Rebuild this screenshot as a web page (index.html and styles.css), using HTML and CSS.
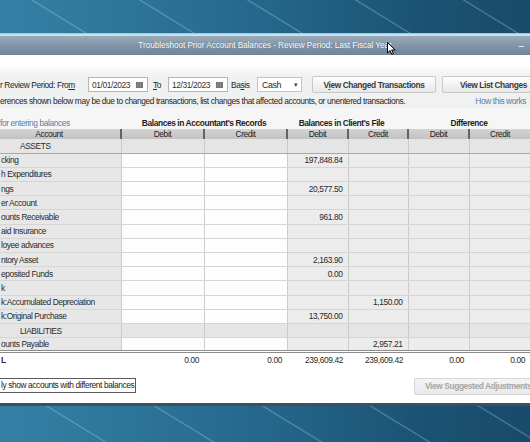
FILE: index.html
```html
<!DOCTYPE html>
<html lang="en">
<head>
    <meta charset="UTF-8">
    <title>Troubleshoot Prior Account Balances</title>
    <link rel="stylesheet" href="styles.css">
</head>
<body>
    <div class="desk"></div>
    <div class="window">
        <div class="titlebar">
            <span></span>
            <span class="title">Troubleshoot Prior Account Balances - Review Period: Last Fiscal Year</span>
            <span class="min">&ndash;</span>
        </div>
        <div class="controls">
            <div class="row1">
                <span class="lbl-period">r Review Period: Fro<u>m</u></span>
                <span class="date">01/01/2023<svg class="cal" width="7" height="6" viewBox="0 0 7 6"><rect width="7" height="6" fill="#6d6d6d"/><path d="M0 2h7M0 4h7M2 0v6M4.5 0v6" stroke="#9a9a9a" stroke-width=".6"/></svg></span>
                <span class="lbl-to"><u>T</u>o</span>
                <span class="date">12/31/2023<svg class="cal" width="7" height="6" viewBox="0 0 7 6"><rect width="7" height="6" fill="#6d6d6d"/><path d="M0 2h7M0 4h7M2 0v6M4.5 0v6" stroke="#9a9a9a" stroke-width=".6"/></svg></span>
                <span class="lbl-basis">Ba<u>s</u>is</span>
                <span class="select">Cash<span class="arrow">&#9662;</span></span>
                <button class="btn btn-changed">V<u>i</u>ew Changed Transactions</button>
                <button class="btn btn-list">View List Changes</button>
            </div>
            <div class="row2">
                <span>erences shown below may be due to changed transactions, list changes that affected accounts, or unentered transactions.</span>
                <a class="link">How this works</a>
            </div>
        </div>
        <div class="groups">
            <a class="link">for entering balances</a>
            <strong>Balances in Accountant's Records</strong>
            <strong>Balances in Client's File</strong>
            <strong>Difference</strong>
        </div>
        <table class="grid">
            <colgroup>
                <col style="width:121px"><col style="width:83px"><col style="width:83px">
                <col style="width:61px"><col style="width:60px"><col style="width:61px"><col style="width:61px">
            </colgroup>
            <thead>
                <tr><th>Account</th><th>Debit</th><th>Credit</th><th>Debit</th><th>Credit</th><th>Debit</th><th>Credit</th></tr>
            </thead>
            <tbody id="rows"></tbody>
            <tfoot>
                <tr class="total"><td>L</td><td>0.00</td><td>0.00</td><td>239,609.42</td><td>239,609.42</td><td>0.00</td><td>0.00</td></tr>
            </tfoot>
        </table>
        <div class="footer">
            <label class="only">ly show accounts with different balances</label>
            <button class="btn btn-suggest">View Suggested Adjustments</button>
        </div>
    </div>
    <svg class="cursor" width="9" height="13" viewBox="0 0 9 13"><path d="M0.5 0.5v10.5l2.6-2.4 1.7 3.9 1.6-.7-1.7-3.8h3.5z" fill="#fff" stroke="#000" stroke-width="1"/></svg>
    <script>
        var rows = [
            ["ASSETS", "section"],
            ["cking", "", "", "197,848.84", "", "", ""],
            ["h Expenditures", "", "", "", "", "", ""],
            ["ngs", "", "", "20,577.50", "", "", ""],
            ["er Account", "", "", "", "", "", ""],
            ["ounts Receivable", "", "", "961.80", "", "", ""],
            ["aid Insurance", "", "", "", "", "", ""],
            ["loyee advances", "", "", "", "", "", ""],
            ["ntory Asset", "", "", "2,163.90", "", "", ""],
            ["eposited Funds", "", "", "0.00", "", "", ""],
            ["k", "", "", "", "", "", ""],
            ["k:Accumulated Depreciation", "", "", "", "1,150.00", "", ""],
            ["k:Original Purchase", "", "", "13,750.00", "", "", ""],
            ["LIABILITIES", "section"],
            ["ounts Payable", "", "", "", "2,957.21", "", ""]
        ];
        var body = document.getElementById("rows");
        rows.forEach(function (r) {
            var tr = document.createElement("tr");
            if (r[1] === "section") {
                tr.className = "section";
                tr.innerHTML = "<td>" + r[0] + "</td><td></td><td></td><td></td><td></td><td></td><td></td>";
            } else {
                tr.innerHTML = r.map(function (v) { return "<td>" + v + "</td>"; }).join("");
            }
            body.appendChild(tr);
        });
    </script>
</body>
</html>
```

FILE: styles.css
```css
* {
    box-sizing: border-box;
}
html, body {
    margin: 0;
}
body {
    width: 530px;
    height: 442px;
    overflow: hidden;
    position: relative;
    font-family: "Liberation Sans", Arial, sans-serif;
    font-size: 8.4px;
    letter-spacing: -0.4px;
    color: #262626;
    background-color: #1f5d80;
    background-image:
        repeating-linear-gradient(31.5deg, transparent 0, transparent 54px, rgba(170, 220, 245, .35) 55px, transparent 56.4px),
        linear-gradient(to right, #3481a5, #276a8f 45%, #1b5273 80%, #194a69);
}
.desk {
    height: 34px;
}
.window {
    background: #fff;
    border-top: 2px solid #c4e3ef;
    border-bottom: 3px solid #3f505b;
    box-shadow: 0 -1px 0 #9ccbe0;
}
.titlebar {
    height: 19px;
    display: grid;
    grid-template-columns: 1fr auto 1fr;
    align-items: center;
    background: linear-gradient(#9aabbb, #8497a9 45%, #70859a);
    color: #fff;
    font-size: 8.2px;
    letter-spacing: -0.05px;
}
.title {
    text-shadow: 0 0 1px rgba(40, 60, 80, .5);
}
.min {
    justify-self: end;
    padding-right: 6px;
    font-size: 10px;
    color: #eef3f7;
}
.controls {
    padding-top: 21px;
    background: linear-gradient(#fff 0, #fff 9px, #eff0f0 22px, #f0f1f1 100%);
}
.row1 {
    display: flex;
    align-items: center;
    height: 17px;
}
.lbl-period {
    width: 88px;
    flex-shrink: 0;
}
.date {
    width: 60px;
    height: 15px;
    flex-shrink: 0;
    display: flex;
    align-items: center;
    justify-content: space-between;
    padding: 0 4px 0 3px;
    background: #fff;
    border: 1px solid #b4b4b4;
    color: #333;
}
.lbl-to {
    width: 15px;
    margin-left: 5px;
    flex-shrink: 0;
}
.lbl-basis {
    width: 26px;
    margin-left: 3px;
    flex-shrink: 0;
}
.select {
    width: 45px;
    height: 15px;
    flex-shrink: 0;
    display: flex;
    align-items: center;
    justify-content: space-between;
    padding: 0 3px 0 4px;
    background: #fff;
    border: 1px solid #c6c6c6;
    font-size: 8.8px;
}
.arrow {
    font-size: 7px;
    color: #444;
}
.btn {
    height: 17px;
    flex-shrink: 0;
    padding: 0;
    white-space: nowrap;
    font-family: inherit;
    font-size: 8.4px;
    letter-spacing: -0.4px;
    font-weight: bold;
    color: #3b3b3b;
    background: linear-gradient(#fefefe, #f3f3f3 50%, #e7e7e7);
    border: 1px solid #c8c8c8;
    border-radius: 2px;
}
.btn-changed {
    width: 124px;
    margin-left: 10px;
}
.btn-list {
    width: 100px;
    margin-left: 6px;
    text-align: left;
    padding-left: 17px;
}
.row2 {
    display: flex;
    justify-content: space-between;
    align-items: center;
    height: 15px;
    padding-right: 4px;
}
.link {
    color: #5a7cac;
}
.groups {
    display: grid;
    grid-template-columns: 121px 166px 121px 122px;
    align-items: end;
    height: 21px;
    padding-bottom: 1px;
    background: #f6f6f6;
}
.groups strong {
    text-align: center;
    color: #1e1e1e;
}
.groups strong:nth-child(3) {
    padding-right: 12px;
}
.grid {
    width: 530px;
    table-layout: fixed;
    border-collapse: collapse;
}
.grid th {
    height: 10px;
    padding: 0;
    font-weight: normal;
    line-height: 9px;
    background: linear-gradient(#d3d3d3, #c2c2c2);
    border-left: 2px solid #646464;
    color: #222;
}
.grid th:first-child {
    border-left: none;
    padding-right: 22px;
}
.grid td {
    height: 14.2px;
    padding: 0 5px 0 0;
    text-align: right;
    white-space: nowrap;
    overflow: hidden;
    background: #ececec;
    border-bottom: 1px solid #d5d5d5;
    border-left: 1px solid #cbcbcb;
    color: #2a2a2a;
}
.grid td:first-child {
    text-align: left;
    padding-left: 1px;
    background: #e7e7e7;
    border-left: none;
}
.grid td:nth-child(2), .grid td:nth-child(3) {
    background: #fdfdfd;
}
.grid tr.section td {
    background: #e5e5e5;
}
.grid tr.section td:first-child {
    padding-left: 20px;
}
.grid tbody tr:first-child td {
    border-bottom-color: #a9a9a9;
}
.grid tr.total td {
    height: 14px;
    background: #fff;
    border-top: 3px double #8c8c8c;
    border-left: none;
    border-bottom: none;
}
.grid tr.total td:first-child {
    font-weight: bold;
}
.footer {
    display: flex;
    align-items: flex-start;
    height: 37px;
    padding-top: 12px;
}
.only {
    height: 15px;
    line-height: 13px;
    padding: 0 1px 0 1px;
    border: 1px solid #5a5a5a;
    border-left: none;
    color: #222;
}
.btn-suggest {
    width: 116px;
    margin-left: auto;
    text-align: left;
    padding-left: 10px;
    color: #a6a6a6;
    background: linear-gradient(#f5f5f5, #e9e9e9);
    border-color: #d6d6d6;
    border-right: none;
    border-radius: 2px 0 0 2px;
}
.cursor {
    position: absolute;
    left: 387px;
    top: 42px;
}
```
